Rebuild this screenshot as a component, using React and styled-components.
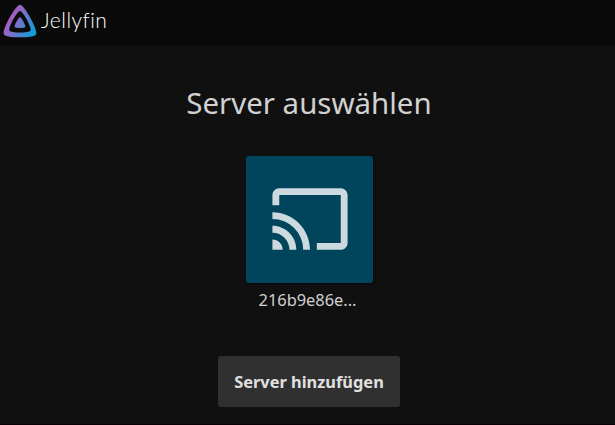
import React from "react";
import styled, { createGlobalStyle } from "styled-components";
import { MdCast } from "react-icons/md";

const servers = [{ id: "216b9e86e", name: "216b9e86e..." }];

function Logo() {
    return (
        <LogoIcon viewBox="0 0 512 512" aria-hidden="true">
            <defs>
                <linearGradient
                    id="logo-gradient"
                    gradientUnits="userSpaceOnUse"
                    x1="110.25"
                    y1="213.3"
                    x2="496.14"
                    y2="436.09"
                >
                    <stop offset="0" stopColor="#aa5cc3" />
                    <stop offset="1" stopColor="#00a4dc" />
                </linearGradient>
            </defs>
            <path
                fill="url(#logo-gradient)"
                d="M256 201.6c-20.4 0-86.2 119.3-76.2 139.4s142.5 19.9 152.4 0-55.7-139.4-76.2-139.4z"
            />
            <path
                fill="url(#logo-gradient)"
                d="M256 23.3c-61.6 0-259.8 359.4-229.6 420.1s429.3 60 459.2 0S317.6 23.3 256 23.3zm150.5 367.5c-19.6 39.3-281.1 39.8-300.9 0s110.1-275.3 150.4-275.3 170.1 235.9 150.5 275.3z"
            />
        </LogoIcon>
    );
}

export default function App() {
    return (
        <Page>
            <GlobalStyle />
            <Header>
                <Logo />
                <Wordmark>Jellyfin</Wordmark>
            </Header>
            <Main>
                <Title>Server auswählen</Title>
                <ServerList>
                    {servers.map((server) => (
                        <ServerCard key={server.id}>
                            <CardImage>
                                <MdCast />
                            </CardImage>
                            <CardText>{server.name}</CardText>
                        </ServerCard>
                    ))}
                </ServerList>
                <RaisedButton>Server hinzufügen</RaisedButton>
            </Main>
        </Page>
    );
}

const GlobalStyle = createGlobalStyle`
    * {
        box-sizing: border-box;
    }
    body {
        margin: 0;
        background: #101010;
        color: #d1d1d1;
        font-family: "Noto Sans", sans-serif;
        overflow: hidden;
    }
`;

const Page = styled.div`
    display: flex;
    flex-direction: column;
    height: 100vh;
    border-bottom: 1px solid #080004;
`;

const Header = styled.header`
    display: flex;
    flex: none;
    height: 46px;
    padding: 3px 2px 0;
    background: #0a0a0a;
`;

const LogoIcon = styled.svg`
    flex: none;
    width: 36px;
    height: 36px;
`;

const Wordmark = styled.span`
    margin: 3px 0 0 3px;
    color: #fff;
    font-family: Lato, sans-serif;
    font-size: 21px;
    font-weight: 300;
    font-variant-ligatures: none;
    letter-spacing: 0.5px;
    line-height: 28px;
`;

const Main = styled.main`
    display: flex;
    flex-direction: column;
    align-items: center;
    padding: 36px 0 0 3px;
`;

const Title = styled.h1`
    margin: 0;
    font-size: 29.45px;
    font-weight: 400;
    line-height: 43px;
`;

const ServerList = styled.div`
    display: flex;
    margin: 31px 0 44px;
`;

const ServerCard = styled.div`
    width: 127px;
`;

const CardImage = styled.div`
    display: flex;
    align-items: center;
    justify-content: center;
    height: 127px;
    padding: 0 0 1px 1px;
    border-radius: 3px;
    background: #00455c;
    box-shadow: 0 1px 3px rgba(0, 0, 0, 0.4);
    color: #ccd9de;
    font-size: 82px;
`;

const CardText = styled.div`
    padding: 5px 3px 1px 0;
    font-size: 16.4px;
    line-height: 23px;
    text-align: center;
`;

const RaisedButton = styled.button`
    width: 182px;
    height: 51px;
    padding: 0;
    border: 0;
    border-radius: 3px;
    background: #303030;
    color: #e0e0e0;
    font: 700 16.4px/22px "Noto Sans", sans-serif;
    cursor: pointer;
`;
